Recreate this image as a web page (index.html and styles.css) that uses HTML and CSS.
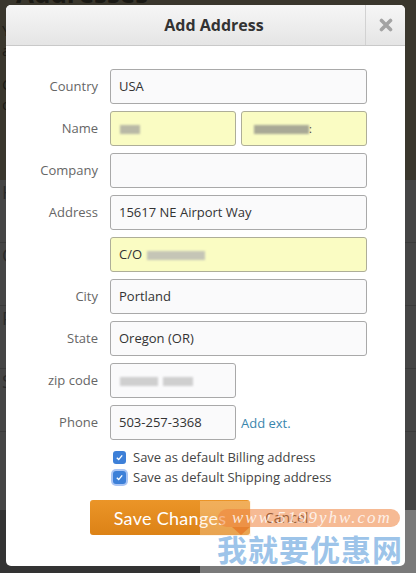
FILE: index.html
```html
<!DOCTYPE html>
<html>
<head>
    <title>Add Address</title>
    <link rel="stylesheet" href="styles.css">
</head>
<body>

    <!-- Page behind the dialog -->
    <div class="page">
        <div class="page-top">
            <h2 class="page-title">Addresses</h2>
            <p>Your saved addresses are listed below. Manage them or add new ones from here.</p>
            <p>Choose your default shipping address or edit an existing one in the list.</p>
        </div>
        <div class="page-list">
            <div class="list-row">Home</div>
            <div class="list-row">Office</div>
            <div class="list-row">Portland</div>
            <div class="list-row">Seattle</div>
        </div>
        <div class="page-foot">
            <div class="foot-left"></div>
            <div class="foot-right"></div>
        </div>
    </div>

    <!-- Add Address dialog -->
    <div class="modal">
        <div class="modal-header">
            <h3 class="modal-title">Add Address</h3>
            <div class="close">
                <svg width="14" height="14" viewBox="0 0 14 14">
                    <path d="M2.5 2.5 L11.5 11.5 M11.5 2.5 L2.5 11.5" stroke="#a3a3a3" stroke-width="3.6" stroke-linecap="round"/>
                </svg>
            </div>
        </div>

        <div class="form">
            <div class="row">
                <label>Country</label>
                <div class="field">USA</div>
            </div>
            <div class="row">
                <label>Name</label>
                <div class="field half filled"><span class="blur blur-a"></span></div>
                <div class="field half filled"><span class="blur blur-b"></span><span class="tick">:</span></div>
            </div>
            <div class="row">
                <label>Company</label>
                <div class="field"></div>
            </div>
            <div class="row">
                <label>Address</label>
                <div class="field">15617 NE Airport Way</div>
            </div>
            <div class="row">
                <label></label>
                <div class="field filled">C/O <span class="blur blur-c"></span></div>
            </div>
            <div class="row">
                <label>City</label>
                <div class="field">Portland</div>
            </div>
            <div class="row">
                <label>State</label>
                <div class="field">Oregon (OR)</div>
            </div>
            <div class="row">
                <label>zip code</label>
                <div class="field half"><span class="blur blur-d"></span><span class="blur blur-e"></span></div>
            </div>
            <div class="row">
                <label>Phone</label>
                <div class="field half">503-257-3368</div>
                <a class="ext">Add ext.</a>
            </div>

            <div class="checks">
                <div class="check"><span class="box"><svg width="9" height="9" viewBox="0 0 9 9"><path d="M1.8 4.8 L3.7 6.6 L7.2 2.4" stroke="#fff" stroke-width="1.4" fill="none"/></svg></span>Save as default Billing address</div>
                <div class="check"><span class="box focus"><svg width="9" height="9" viewBox="0 0 9 9"><path d="M1.8 4.8 L3.7 6.6 L7.2 2.4" stroke="#fff" stroke-width="1.4" fill="none"/></svg></span>Save as default Shipping address</div>
            </div>

            <div class="actions">
                <button class="save">Save Changes</button>
                <button class="cancel">Cancel</button>
            </div>
        </div>
    </div>

    <!-- Watermark stamped over the screenshot -->
    <div class="wm-box"></div>
    <div class="wm-pill">www.5199yhw.com</div>
    <div class="wm-tail"></div>
    <div class="wm-cn">我就要优惠网</div>

</body>
</html>
```

FILE: styles.css
```css
body { margin: 0; font-family: "Open Sans", sans-serif; background: #444; overflow: hidden; }

.page { width: 416px; height: 573px; display: flex; flex-direction: column; }
.page-top { height: 180px; background: #3a372d; color: #1c1b16; padding: 0 0 0 2px; overflow: hidden; }
.page-title { margin: -20px 0 0 14px; font-size: 26px; line-height: 26px; color: #1a1914; }
.page-top p { margin: 14px 0 0; font-size: 15px; line-height: 20px; }
.page-list { flex: 1; background: #454545; }
.list-row { height: 62px; border-bottom: 1px solid #3a3a3a; color: #2a2a2a; font-size: 18px; padding-left: 2px; }
.page-foot { height: 63px; display: flex; }
.foot-left { width: 200px; background: #333; }
.foot-right { flex: 1; background: #7a7a7a; }

.modal {
    position: absolute;
    left: 6px;
    top: 5px;
    width: 399px;
    height: 561px;
    background: #fff;
    border-radius: 5px;
    overflow: hidden;
}
.modal-header {
    display: flex;
    height: 40px;
    border-bottom: 1px solid #c9c9c9;
    background: linear-gradient(#f6f6f6, #e5e5e5);
}
.modal-title {
    flex: 1;
    margin: 0;
    padding-left: 57px;
    text-align: center;
    font-size: 16px;
    font-weight: bold;
    line-height: 40px;
    color: #333;
}
.close {
    width: 39px;
    border-left: 1px solid #d2d2d2;
    display: flex;
    align-items: center;
    justify-content: center;
}

.form { padding-top: 23px; }
.row { display: flex; align-items: center; height: 35px; margin-bottom: 7px; }
.row label { width: 92px; margin-right: 12px; text-align: right; font-size: 13px; line-height: 33px; color: #666; }
.field {
    box-sizing: border-box;
    width: 257px;
    height: 35px;
    border: 1px solid #a9a9a9;
    border-radius: 3px;
    background: #fafafb;
    padding: 0 8px;
    font-size: 13px;
    line-height: 33px;
    color: #333;
    white-space: nowrap;
}
.field.half { width: 126px; margin-right: 5px; }
.field.filled { background: #fafcc3; border-color: #aeae98; }

.blur { display: inline-block; height: 9px; background: #b9b9a6; filter: blur(1.2px); vertical-align: middle; }
.blur-a { width: 20px; margin-left: 1px; }
.blur-b { width: 55px; margin-left: 4px; background: #a9a996; }
.blur-c { width: 58px; margin-left: 2px; background: #c5c5b6; }
.blur-d { width: 38px; margin-left: 1px; background: #cfcfcf; }
.blur-e { width: 30px; margin-left: 5px; background: #cfcfcf; }
.tick { font-size: 11px; color: #333; }

.ext { font-size: 13px; color: #3a86ad; }

.checks { margin-left: 107px; }
.check { display: flex; align-items: center; height: 20px; font-size: 13px; color: #444; }
.box {
    width: 13px;
    height: 13px;
    margin-right: 7px;
    border-radius: 3px;
    background: #3d80d8;
    display: flex;
    align-items: center;
    justify-content: center;
}
.box.focus { box-shadow: 0 0 0 2px rgba(100, 150, 235, 0.55); }

.actions { display: flex; align-items: center; margin: 13px 0 0 84px; }
.save {
    width: 160px;
    height: 35px;
    border: 0;
    border-radius: 3px;
    background: linear-gradient(#eb9528, #dc8216);
    color: #fff;
    font-family: "Lato", sans-serif;
    font-size: 18px;
    letter-spacing: 0.3px;
    padding: 0;
}
.cancel {
    margin-left: 15px;
    border: 0;
    background: none;
    padding: 0;
    font-family: "Open Sans", sans-serif;
    font-size: 14px;
    color: #333;
}

/* watermark overlay */
.wm-box { position: absolute; left: 200px; top: 501px; width: 51px; height: 35px; background: rgba(255, 225, 190, 0.35); }
.wm-pill {
    position: absolute;
    left: 218px;
    top: 509px;
    width: 182px;
    height: 18px;
    border-radius: 9px;
    background: rgba(238, 130, 60, 0.55);
    box-sizing: border-box;
    padding-left: 14px;
    font-family: "Liberation Serif", serif;
    font-style: italic;
    font-size: 17px;
    line-height: 18px;
    letter-spacing: 2px;
    color: rgba(255, 255, 255, 0.8);
}
.wm-tail {
    position: absolute;
    left: 232px;
    top: 527px;
    border-left: 9px solid transparent;
    border-right: 9px solid transparent;
    border-top: 8px solid rgba(230, 120, 40, 0.8);
}
.wm-cn {
    position: absolute;
    left: 217px;
    top: 528px;
    font-family: "Noto Sans CJK SC", sans-serif;
    font-weight: bold;
    font-size: 30px;
    line-height: 40px;
    letter-spacing: 1px;
    color: rgba(130, 180, 228, 0.8);
}
```
